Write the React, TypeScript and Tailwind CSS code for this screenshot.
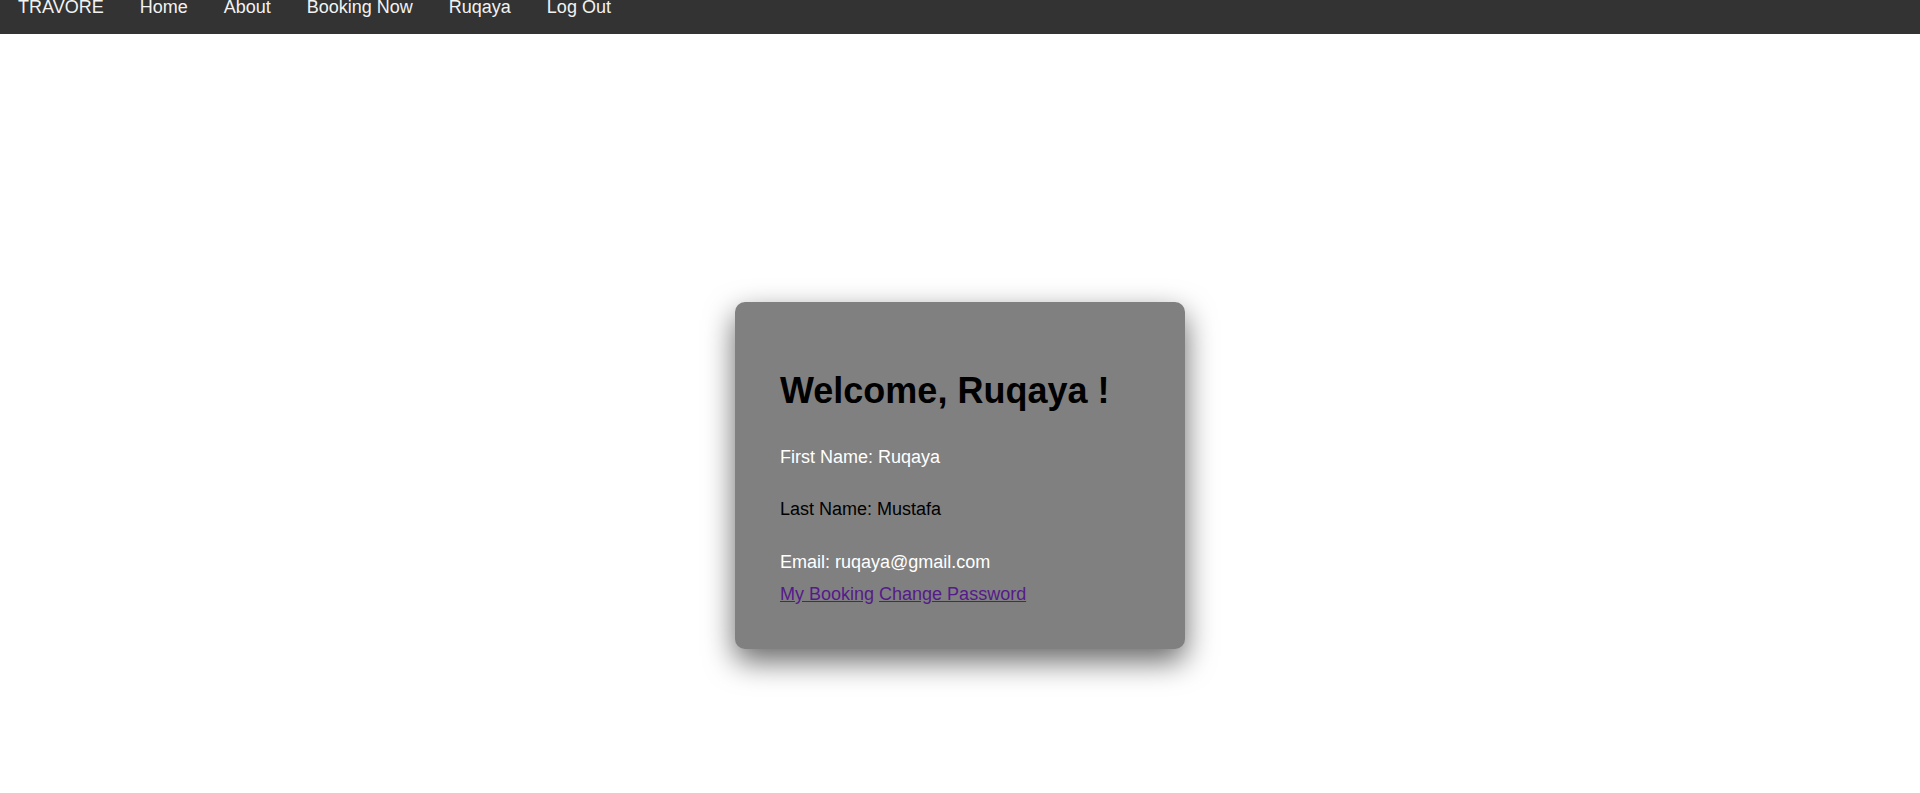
import React from 'react';

const navLinks = ['TRAVORE', 'Home', 'About', 'Booking Now', 'Ruqaya', 'Log Out'];

export default function App() {
  return (
    <div className="min-h-screen bg-white font-['Liberation_Sans',Arial,sans-serif]">
      {/* Top navigation */}
      <nav className="h-[34px] bg-[#333333] flex items-start">
        {navLinks.map((link) => (
          <a
            key={link}
            href="#"
            className="px-[18px] text-[18px] leading-[15px] text-[#f2f2f2] no-underline"
          >
            {link}
          </a>
        ))}
      </nav>

      {/* Profile card */}
      <main className="flex justify-center pt-[268px]">
        <div className="w-[450px] rounded-[10px] bg-[#808080] pl-[45px] pr-[40px] pt-[68px] pb-[44px] shadow-[0_12px_30px_rgba(0,0,0,0.6)]">
          <h1 className="text-[36px] leading-[41px] font-bold text-black mb-[36px]">Welcome, Ruqaya !</h1>
          <p className="text-[18px] leading-[21px] text-white mb-[31px]">First Name: Ruqaya</p>
          <p className="text-[18px] leading-[21px] text-black mb-[32px]">Last Name: Mustafa</p>
          <p className="text-[18px] leading-[21px] text-white mb-[11px]">Email: ruqaya@gmail.com</p>
          <div className="text-[18px] leading-[21px]">
            <a href="#" className="text-[#551a8b] underline">My Booking</a>{' '}
            <a href="#" className="text-[#551a8b] underline">Change Password</a>
          </div>
        </div>
      </main>
    </div>
  );
}
